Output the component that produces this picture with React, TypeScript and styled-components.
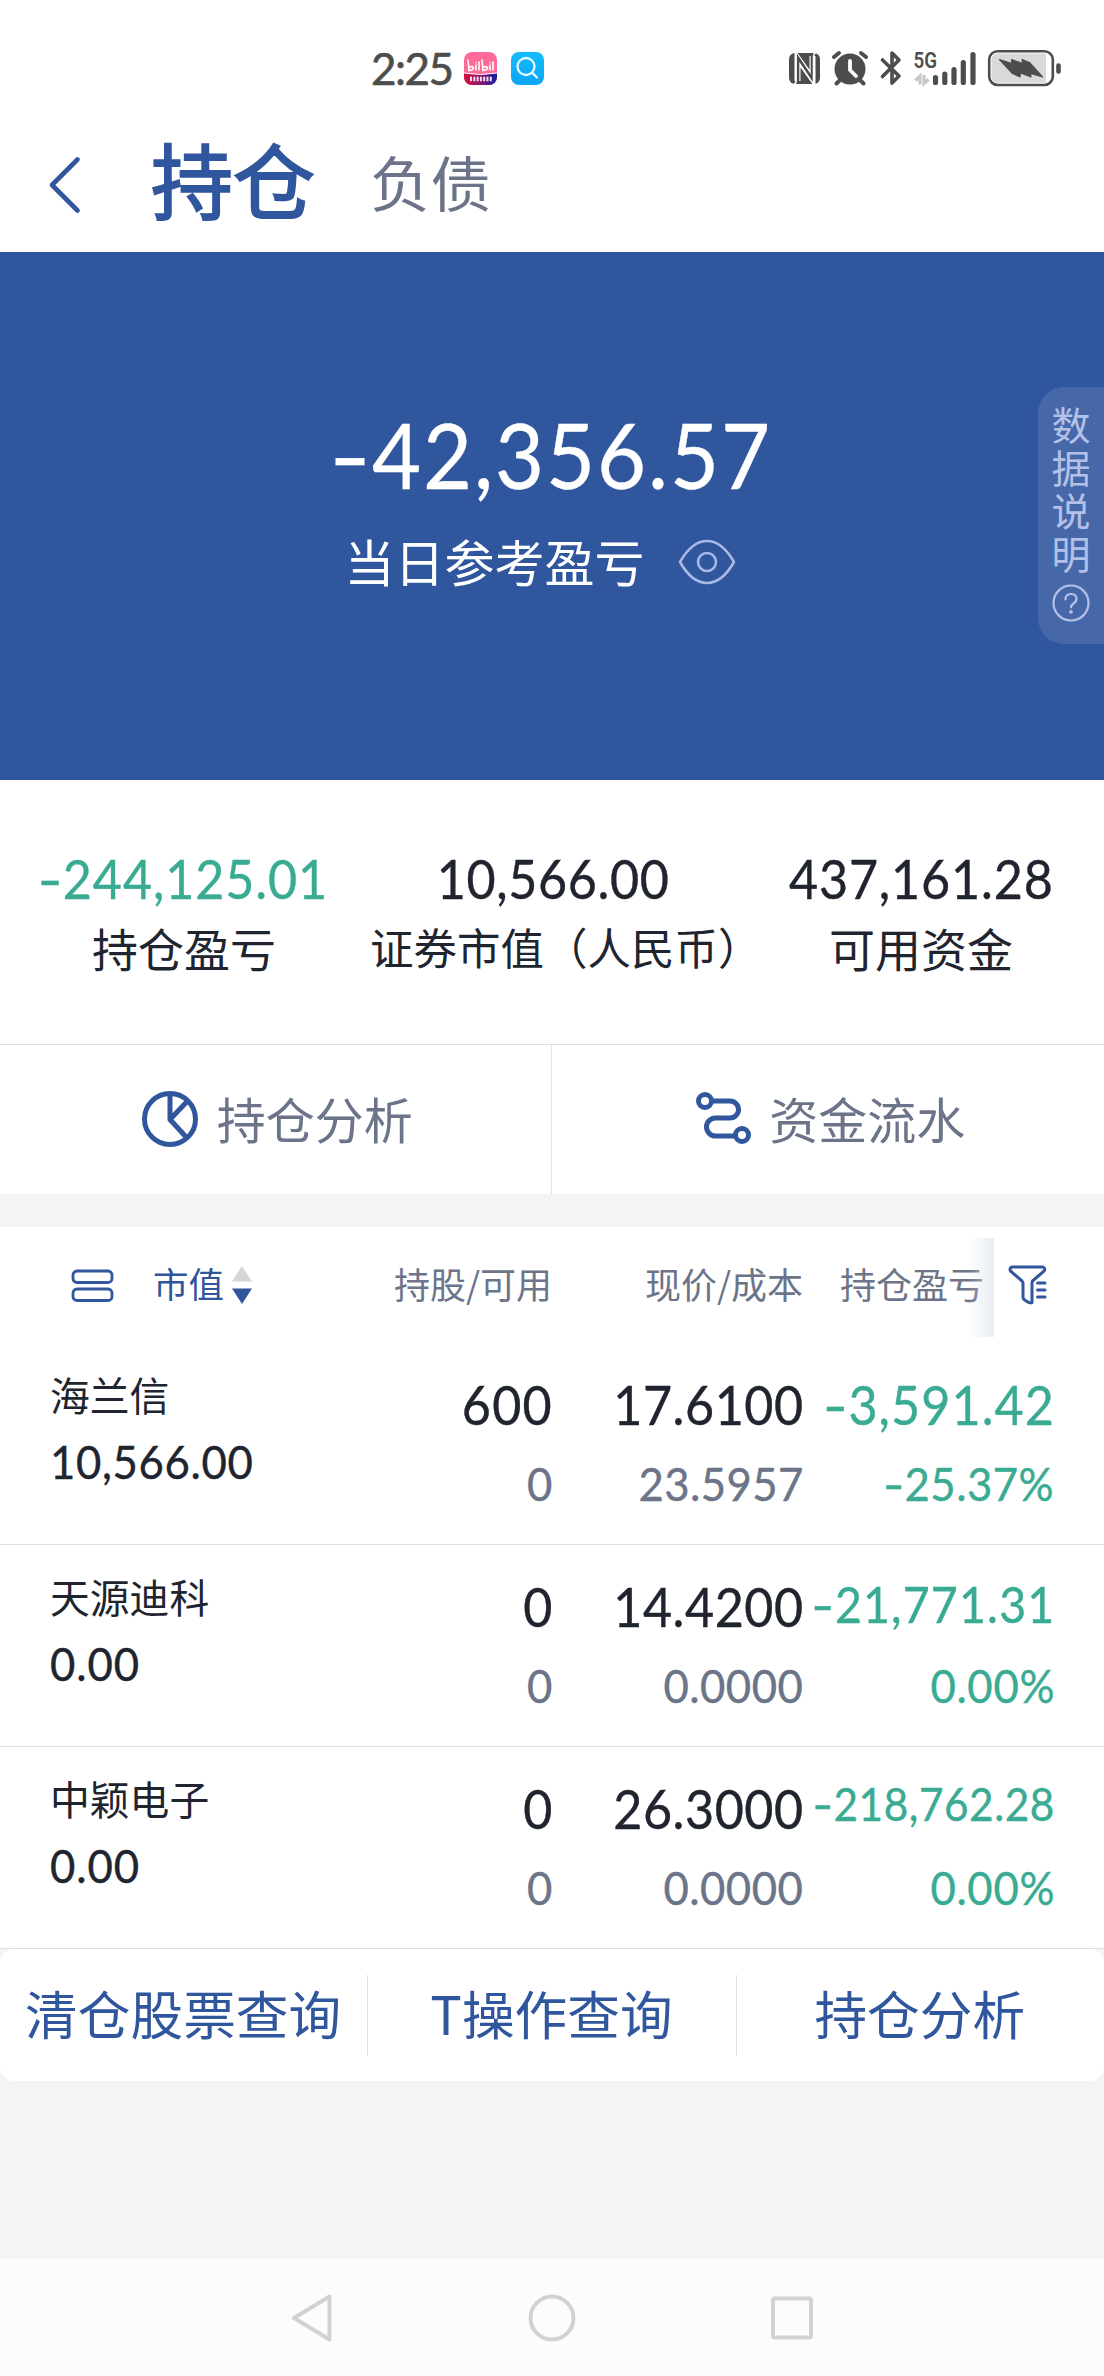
import React from "react";
import styled, { createGlobalStyle } from "styled-components";

const BLUE = "#30569d";
const DARK = "#20242f";
const GRAY = "#6b7488";
const GREEN = "#3aab93";
const STATUS = "#4d4d4d";
const CJK = `"Noto Sans CJK SC", "Noto Sans", sans-serif`;
const DIGITS = `Lato, "Noto Sans CJK SC", sans-serif`;

const GlobalStyle = createGlobalStyle`
  * { box-sizing: border-box; }
  body { margin: 0; background: #f3f4f6; font-family: ${CJK}; }
  svg { display: block; flex: none; }
`;

const Screen = styled.div`
  width: 1104px;
  height: 2376px;
  display: flex;
  flex-direction: column;
  background: #f3f4f6;
  overflow: hidden;
`;

const Label = styled.span<{ $size: number; $color?: string; $lh?: number }>`
  font-family: ${CJK};
  font-size: ${(p) => p.$size}px;
  line-height: ${(p) => p.$lh ?? 60}px;
  color: ${(p) => p.$color ?? DARK};
  white-space: nowrap;
`;

type Align = "left" | "center" | "right";

interface NumProps {
  $size: number;
  $color?: string;
  $lh?: number;
  $h?: number;
  $ls?: number;
  $align?: Align;
}

/* Digits are condensed slightly; tracking makes up for the lost width. */
const CONDENSE = 0.93;

const Num = styled.span<NumProps>`
  display: block;
  font-family: ${DIGITS};
  font-size: ${(p) => p.$size}px;
  line-height: ${(p) => p.$lh ?? 58}px;
  height: ${(p) => p.$h ?? p.$lh ?? 58}px;
  letter-spacing: ${(p) => p.$ls ?? 0}px;
  margin-right: ${(p) => -(p.$ls ?? 0)}px;
  color: ${(p) => p.$color ?? DARK};
  -webkit-text-stroke: 0.4px ${(p) => p.$color ?? DARK};
  transform: scaleX(${CONDENSE});
  transform-origin: ${(p) => p.$align ?? "right"} center;
  white-space: nowrap;
`;

const Minus = styled.span`
  display: inline-block;
  margin-right: 0.05em;
  transform: scaleX(1.35);
`;

function tracking(value: string, size: number, ls: number) {
  const width = [...value].reduce((sum, ch) => {
    const em = ch === "," || ch === "." ? 0.24 : ch === "-" ? 0.42 : ch === "%" ? 0.8 : 0.58;
    return sum + em * size + ls;
  }, 0);
  const gaps = Math.max(1, value.length - 1);
  return value.length === 1 ? 0 : ls + (width * (1 / CONDENSE - 1)) / gaps;
}

function Amount({ value, $ls = 0, ...rest }: { value: string } & NumProps) {
  const negative = value.startsWith("-");
  return (
    <Num {...rest} $ls={tracking(value, rest.$size, $ls)}>
      {negative && <Minus>-</Minus>}
      {negative ? value.slice(1) : value}
    </Num>
  );
}

/* ---------- status bar ---------- */

const StatusBar = styled.div`
  height: 118px;
  flex: none;
  padding: 18px 43px 0 371px;
  display: flex;
  align-items: center;
  justify-content: space-between;
  background: #fff;
`;

const StatusGroup = styled.div`
  display: flex;
  align-items: center;
`;

const Clock = styled.span`
  width: 93px;
  font-family: ${DIGITS};
  font-size: 44px;
  line-height: 50px;
  letter-spacing: -1.5px;
  -webkit-text-stroke: 0.6px ${STATUS};
  color: ${STATUS};
`;

const BiliBadge = styled.span`
  width: 33px;
  height: 33px;
  margin-right: 14px;
  border-radius: 8px;
  overflow: hidden;
  background: #ff6a98;
`;

const SearchBadge = styled.span`
  width: 33px;
  height: 33px;
  border-radius: 8px;
  background: linear-gradient(#12bcfb, #0da4f5);
`;

const BiliIcon = () => (
  <BiliBadge>
    <svg width="33" height="33" viewBox="0 0 33 33">
      <defs>
        <linearGradient id="ribbon" x1="0" x2="1">
          <stop offset="0" stopColor="#d8103c" />
          <stop offset="0.5" stopColor="#8a1a70" />
          <stop offset="1" stopColor="#0b1fa0" />
        </linearGradient>
      </defs>
      <path d="M0 21Q16 24 33 21V33H0Z" fill="url(#ribbon)" />
      <path d="M0 21Q16 24 33 21" stroke="#fff" strokeWidth="1" fill="none" />
      <g stroke="#fff" strokeWidth="1.6" fill="none" strokeLinecap="round">
        <path d="M4 8L5 18.500Q10 18 9.500 15.500Q8 14 5 15" />
        <path d="M12 13V18M15 10V18M12 10.500V10.600" />
        <path d="M18 8L19 18.500Q24 18 23.500 15.500Q22 14 19 15" />
        <path d="M26 13V18M29 10V18M26 10.500V10.600" />
      </g>
      <path d="M6 27H28" stroke="#f3dfea" strokeWidth="4.500" strokeDasharray="2 1.300" />
    </svg>
  </BiliBadge>
);

const SearchIcon = () => (
  <SearchBadge>
    <svg width="33" height="33" viewBox="0 0 33 33" fill="none" stroke="#e8f8ff" strokeWidth="2.300" strokeLinecap="round">
      <circle cx="15" cy="14.500" r="8.500" />
      <path d="M21.500 21L26 25.500" />
    </svg>
  </SearchBadge>
);

const StatusIcons = () => (
  <svg width="274" height="38" viewBox="786 48 274 38" fill="none">
    <rect x="788" y="52" width="31" height="31" rx="6" fill={STATUS} />
    <path d="M796.500 80V57L811.500 78V55" stroke="#fff" strokeWidth="6" />
    <path d="M797 82V56.500L811 77.500V52" stroke={STATUS} strokeWidth="2.600" />
    <path d="M793 83Q795 83 795 80V52M815 52Q812.500 52 812.500 56V83" stroke="#fff" strokeWidth="1.500" />

    <circle cx="849" cy="68" r="15.500" fill={STATUS} />
    <path d="M833 56L838 52M865 56L860 52M839 79L835.500 82.500M859 79L862.500 82.500" stroke={STATUS} strokeWidth="4" strokeLinecap="round" />
    <path d="M849 60V69L855 75" stroke="#fff" strokeWidth="3.800" strokeLinecap="round" />

    <path d="M881.500 59L898 75L891 82V52L898 59L881.500 75.500" stroke={STATUS} strokeWidth="3.600" strokeLinecap="round" strokeLinejoin="round" />

    <text x="912.500" y="67" fill={STATUS} fontFamily="Roboto, sans-serif" fontWeight="600" fontSize="22" textLength="23.500" lengthAdjust="spacingAndGlyphs">5G</text>
    <path d="M919 83.500V75L914.500 79.500M923 74V82.500L927.500 78.500" stroke="#c9c9c9" strokeWidth="3.200" />
    <path d="M934.500 76.500V81.500M943.800 73V81.500M953 68.500V81.500M962.300 61.500V81.500M972 53.500V81.500" stroke={STATUS} strokeWidth="5.200" strokeLinecap="round" />

    <rect x="988.200" y="50.200" width="63.600" height="33.800" rx="8.500" fill="#fff" stroke={STATUS} strokeWidth="2.600" />
    <path d="M997 52.500H1045V81.700H997Q990.500 81.700 990.500 75.700V58.500Q990.500 52.500 997 52.500Z" fill="#d9d9d9" />
    <path d="M1057.500 64.500V70.500" stroke={STATUS} strokeWidth="4.600" strokeLinecap="round" />
    <path d="M998.500 58.500L1011 62.500L1010.500 58.500L1021.500 62.500L1021 58.500L1028.500 61.500L1041.500 76L1029.500 72.500L1030 76L1019.500 72L1019 76L1011.500 72.500Z" fill={STATUS} stroke={STATUS} strokeWidth="1.200" strokeLinejoin="round" />
  </svg>
);

/* ---------- header ---------- */

const Header = styled.div`
  height: 134px;
  flex: none;
  padding: 0 0 0 46px;
  display: flex;
  align-items: center;
  background: #fff;
`;

const BackIcon = styled.svg`
  margin-right: 65px;
`;

const MainTab = styled(Label)`
  width: 219px;
  margin-top: -14px;
  -webkit-text-stroke: 2px ${BLUE};
`;

const SideTab = styled(Label)`
  margin-top: -9px;
`;

/* ---------- summary ---------- */

const Hero = styled.div`
  height: 528px;
  flex: none;
  background: ${BLUE};
  position: relative;
  display: flex;
  flex-direction: column;
  align-items: center;
  padding-top: 150px;
`;

const HeroLabel = styled.div`
  display: flex;
  align-items: center;
  gap: 33px;
  margin: 24px 0 0 -24px;
`;

const EyeIcon = styled.svg`
  margin-top: 3px;
`;

const DataNote = styled.div`
  position: absolute;
  right: 0;
  top: 135px;
  width: 66px;
  height: 257px;
  padding-top: 15px;
  border-radius: 26px 0 0 26px;
  background: #4768a8;
  display: flex;
  flex-direction: column;
  align-items: center;
  gap: 10px;
`;

const NoteText = styled.span`
  width: 39px;
  font-size: 39px;
  line-height: 43px;
  color: #b3c0e8;
  word-break: break-all;
`;

const Stats = styled.div`
  height: 265px;
  flex: none;
  padding-top: 70px;
  display: grid;
  grid-template-columns: repeat(3, 368px);
  background: #fff;
  border-bottom: 1px solid #dcdee1;
`;

const Stat = styled.div<{ $shift?: number }>`
  display: flex;
  flex-direction: column;
  align-items: center;
  padding-left: ${(p) => p.$shift ?? 0}px;
`;

const StatLabel = styled(Label)<{ $start?: boolean }>`
  margin-top: 9px;
  align-self: ${(p) => (p.$start ? "flex-start" : "center")};
`;

/* ---------- shortcuts ---------- */

const Shortcuts = styled.div`
  height: 149px;
  flex: none;
  display: flex;
  background: #fff;
`;

const Shortcut = styled.div`
  flex: 1;
  display: flex;
  align-items: center;
  justify-content: center;
  gap: 18px;
  padding: 0 0 1px 3px;
  & + & {
    padding-left: 5px;
    border-left: 1px solid #e2e3e6;
  }
`;

const ShortcutLabel = styled(Label)`
  margin-top: -3px;
`;

/* ---------- positions ---------- */

const Positions = styled.div`
  border-top: 33px solid #f4f4f4;
  background: #fff;
`;

const columns = "260px 242px 251px 251px";

const HeadRow = styled.div`
  position: relative;
  height: 116px;
  padding: 0 50px;
  display: grid;
  grid-template-columns: ${columns};
  align-items: center;
`;

const SortCell = styled.div`
  display: flex;
  align-items: center;
  padding-left: 21px;
`;

const SortLabel = styled(Label)`
  margin: -4px 7px 0 39px;
`;

const HeadCell = styled(Label)`
  margin-top: -4px;
  text-align: right;
`;

const LastHeadCell = styled.div`
  display: flex;
  align-items: center;
  justify-content: space-between;
  padding: 0 7px 0 37px;
`;

const EdgeFade = styled.div`
  position: absolute;
  left: 968px;
  top: 11px;
  width: 26px;
  height: 99px;
  background: linear-gradient(90deg, rgba(232, 237, 244, 0), rgba(221, 228, 238, 0.65));
`;

const Row = styled.div`
  height: 202px;
  padding: 0 50px;
  display: grid;
  grid-template-columns: ${columns};
  border-bottom: 1px solid #dcdee1;
`;

const NameCell = styled.div`
  padding-top: 25px;
  display: flex;
  flex-direction: column;
  align-items: flex-start;
  gap: 16px;
`;

const ValueCell = styled.div`
  padding-top: 33px;
  display: flex;
  flex-direction: column;
  align-items: flex-end;
  gap: 24px;
`;

interface Position {
  name: string;
  value: string;
  held: string;
  free: string;
  price: string;
  cost: string;
  profit: string;
  rate: string;
  profitSize: number;
  profitLh: number;
  profitLs: number;
}

const positions: Position[] = [
  { name: "海兰信", value: "10,566.00", held: "600", free: "0", price: "17.6100", cost: "23.5957", profit: "-3,591.42", rate: "-25.37%", profitSize: 54, profitLh: 58, profitLs: -1 },
  { name: "天源迪科", value: "0.00", held: "0", free: "0", price: "14.4200", cost: "0.0000", profit: "-21,771.31", rate: "0.00%", profitSize: 50, profitLh: 53, profitLs: -0.8 },
  { name: "中颖电子", value: "0.00", held: "0", free: "0", price: "26.3000", cost: "0.0000", profit: "-218,762.28", rate: "0.00%", profitSize: 45.5, profitLh: 47, profitLs: -1.2 },
];

/* ---------- footer ---------- */

const Links = styled.div`
  height: 132px;
  flex: none;
  display: flex;
  align-items: center;
  background: #fff;
  border-radius: 14px;
`;

const LinkItem = styled.div`
  flex: 1;
  height: 81px;
  display: flex;
  align-items: center;
  justify-content: center;
  & + & {
    border-left: 1px solid #dfe1e5;
  }
`;

const LinkLabel = styled(Label)`
  margin: -6px 1px 0 0;
`;

const NavBar = styled.div`
  height: 117px;
  margin-top: auto;
  padding: 0 290px;
  display: flex;
  align-items: center;
  justify-content: space-between;
  background: #fcfcfc;
`;

export default function App() {
  return (
    <Screen>
      <GlobalStyle />
      <StatusBar>
        <StatusGroup>
          <Clock>2:25</Clock>
          <BiliIcon />
          <SearchIcon />
        </StatusGroup>
        <StatusIcons />
      </StatusBar>

      <Header>
        <BackIcon width="40" height="60" viewBox="0 0 40 60" fill="none" stroke={BLUE} strokeWidth="4.600" strokeLinecap="round" strokeLinejoin="round">
          <path d="M31.500 4.500L6 30L31.500 55.500" />
        </BackIcon>
        <MainTab $size={82} $lh={100} $color={BLUE}>持仓</MainTab>
        <SideTab $size={60.5} $lh={80} $color={GRAY}>负债</SideTab>
      </Header>

      <Hero>
        <Amount value="-42,356.57" $size={91} $ls={-1.6} $lh={104} $align="center" $color="#fff" />
        <HeroLabel>
          <Label $size={50} $color="#fff">当日参考盈亏</Label>
          <EyeIcon width="58" height="48" viewBox="0 0 58 48" fill="none" stroke="#a9b9e6" strokeWidth="2.600">
            <path d="M2 24Q14 3 29 3T56 24Q44 45 29 45T2 24Z" strokeLinejoin="round" />
            <circle cx="29" cy="24" r="9" />
          </EyeIcon>
        </HeroLabel>
        <DataNote>
          <NoteText>数据说明</NoteText>
          <svg width="38" height="38" viewBox="0 0 38 38" fill="none" stroke="#b3c0e8" strokeWidth="2.200" strokeLinecap="round">
            <circle cx="19" cy="19" r="17.500" />
            <path d="M13.500 15.500Q13.500 10 19 10T24.500 15Q24.500 17.500 21.500 19.500Q19 21.200 19 23.500" />
            <circle cx="19" cy="27.800" r="0.800" fill="#b3c0e8" />
          </svg>
        </DataNote>
      </Hero>

      <Stats>
        <Stat>
          <Amount value="-244,125.01" $size={54} $ls={-1.2} $align="center" $color={GREEN} />
          <StatLabel $size={46}>持仓盈亏</StatLabel>
        </Stat>
        <Stat $shift={2}>
          <Amount value="10,566.00" $size={54} $ls={-1.5} $align="center" />
          <StatLabel $size={43.5} $start>证券市值（人民币）</StatLabel>
        </Stat>
        <Stat $shift={2}>
          <Amount value="437,161.28" $size={54} $ls={-1.3} $align="center" />
          <StatLabel $size={46}>可用资金</StatLabel>
        </Stat>
      </Stats>

      <Shortcuts>
        <Shortcut>
          <svg width="58" height="58" viewBox="0 0 58 58" fill="none" stroke={BLUE} strokeWidth="5">
            <circle cx="29" cy="29" r="25.500" />
            <path d="M29 4V29.500L46.500 11M29 29.500L46 48" strokeLinejoin="round" />
          </svg>
          <ShortcutLabel $size={49} $color={GRAY}>持仓分析</ShortcutLabel>
        </Shortcut>
        <Shortcut>
          <svg width="56" height="56" viewBox="696 1091 56 56" fill="none" stroke={BLUE} strokeWidth="5">
            <circle cx="706" cy="1101" r="6.500" />
            <path d="M713 1101H731A8.500 8.500 0 0 1 731 1118H716.500A9 9 0 0 0 716.500 1136H736" />
            <circle cx="743" cy="1135" r="6.500" />
          </svg>
          <ShortcutLabel $size={49} $color={GRAY}>资金流水</ShortcutLabel>
        </Shortcut>
      </Shortcuts>

      <Positions>
        <HeadRow>
          <SortCell>
            <svg width="43" height="33" viewBox="0 0 43 33" fill="none" stroke={BLUE} strokeWidth="2.800">
              <rect x="2" y="2" width="39" height="11.500" rx="4" />
              <rect x="2" y="20" width="39" height="11.500" rx="4" />
            </svg>
            <SortLabel $size={35.5} $color={BLUE}>市值</SortLabel>
            <svg width="22" height="40" viewBox="0 0 22 40">
              <path d="M11 1L21 16.500H1Z" fill="#d4d6da" />
              <path d="M11 39L21 23.500H1Z" fill={BLUE} />
            </svg>
          </SortCell>
          <HeadCell $size={36} $color={GRAY}>持股/可用</HeadCell>
          <HeadCell $size={36} $color={GRAY}>现价/成本</HeadCell>
          <LastHeadCell>
            <HeadCell $size={36} $color={GRAY}>持仓盈亏</HeadCell>
            <svg width="39" height="40" viewBox="0 0 39 40" fill="none" stroke={BLUE} strokeWidth="3" strokeLinejoin="round" strokeLinecap="round">
              <path d="M4 2H35Q38 3.500 36 6L24.500 16Q24 17 24 18V37.500Q22 39 16 34.500Q15 33.500 15 32V18Q15 17 14 16L2.500 6Q1 3 4 2Z" />
              <path d="M29.500 18H37M29.500 25H37M29.500 32H37" />
            </svg>
          </LastHeadCell>
          <EdgeFade />
        </HeadRow>
        {positions.map((p) => (
          <Row key={p.name}>
            <NameCell>
              <Label $size={39.8} $lh={52}>{p.name}</Label>
              <Amount value={p.value} $size={47} $lh={50} $ls={-1.2} $align="left" />
            </NameCell>
            <ValueCell>
              <Amount value={p.held} $size={54} $ls={-2} />
              <Amount value={p.free} $size={47} $lh={50} $ls={-1.6} $color={GRAY} />
            </ValueCell>
            <ValueCell>
              <Amount value={p.price} $size={54} $ls={-1.8} />
              <Amount value={p.cost} $size={47} $lh={50} $ls={-1.6} $color={GRAY} />
            </ValueCell>
            <ValueCell>
              <Amount value={p.profit} $size={p.profitSize} $lh={p.profitLh} $h={58} $ls={p.profitLs} $color={GREEN} />
              <Amount value={p.rate} $size={47} $lh={50} $ls={-1.6} $color={GREEN} />
            </ValueCell>
          </Row>
        ))}
      </Positions>

      <Links>
        <LinkItem><LinkLabel $size={52.7} $color={BLUE}>清仓股票查询</LinkLabel></LinkItem>
        <LinkItem><LinkLabel $size={52.7} $color={BLUE}>T操作查询</LinkLabel></LinkItem>
        <LinkItem><LinkLabel $size={52.7} $color={BLUE}>持仓分析</LinkLabel></LinkItem>
      </Links>

      <NavBar>
        <svg width="44" height="50" viewBox="0 0 44 50" fill="none" stroke="#d2d2d2" strokeWidth="4" strokeLinejoin="round">
          <path d="M39.500 3.500V46.500L4 25Z" />
        </svg>
        <svg width="48" height="48" viewBox="0 0 48 48" fill="none" stroke="#d2d2d2" strokeWidth="4">
          <circle cx="24" cy="24" r="21.500" />
        </svg>
        <svg width="44" height="44" viewBox="0 0 44 44" fill="none" stroke="#d2d2d2" strokeWidth="4">
          <rect x="3" y="2.500" width="38" height="39" rx="2" />
        </svg>
      </NavBar>
    </Screen>
  );
}
